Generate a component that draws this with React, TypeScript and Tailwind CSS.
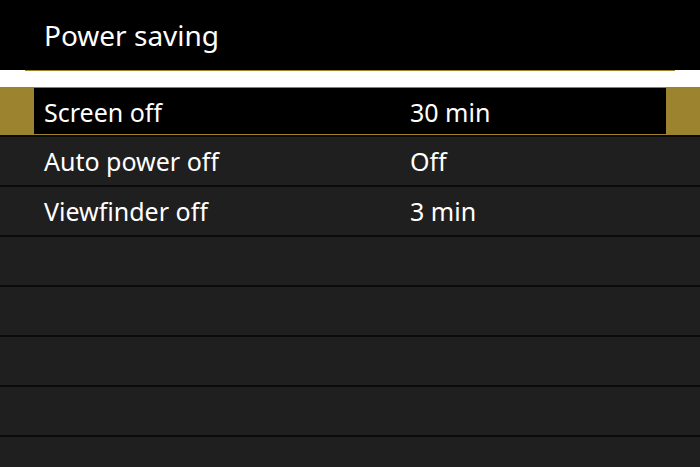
import React from 'react';

const rows = [
  { label: 'Screen off', value: '30 min', selected: true },
  { label: 'Auto power off', value: 'Off' },
  { label: 'Viewfinder off', value: '3 min' },
  { label: '', value: '' },
  { label: '', value: '' },
  { label: '', value: '' },
  { label: '', value: '' },
  { label: '', value: '' },
];

export default function App() {
  return (
    <div
      className="w-[700px] h-[467px] overflow-hidden bg-[#0b0b0b] text-white"
      style={{ fontFamily: '"Noto Sans", "Open Sans", sans-serif' }}
    >
      {/* Header */}
      <div className="h-[70px] bg-black pl-[44px] pt-[15px] text-[28px] leading-[40px]">Power saving</div>

      {/* Scroll/progress bar */}
      <div className="h-[17px] bg-white">
        <div className="mx-[25px] h-px bg-[#9b8330]" />
      </div>

      {/* Menu list */}
      <div className="flex flex-col">
        {rows.map((row, i) =>
          row.selected ? (
            <div key={i} className="h-[48px] bg-[#9b8330] px-[34px] py-px">
              <div className="h-full bg-black flex items-center text-[25px] pt-[3px]">
                <span className="w-[376px] pl-[10px]">{row.label}</span>
                <span>{row.value}</span>
              </div>
            </div>
          ) : (
            <div
              key={i}
              className="h-[50px] shrink-0 bg-[#1f1f1f] border-t-2 border-[#0a0a0a] first:border-t-0 flex items-center text-[25px] pl-[44px] pt-[2px]"
            >
              <span className="w-[366px]">{row.label}</span>
              <span>{row.value}</span>
            </div>
          )
        )}
      </div>
    </div>
  );
}
